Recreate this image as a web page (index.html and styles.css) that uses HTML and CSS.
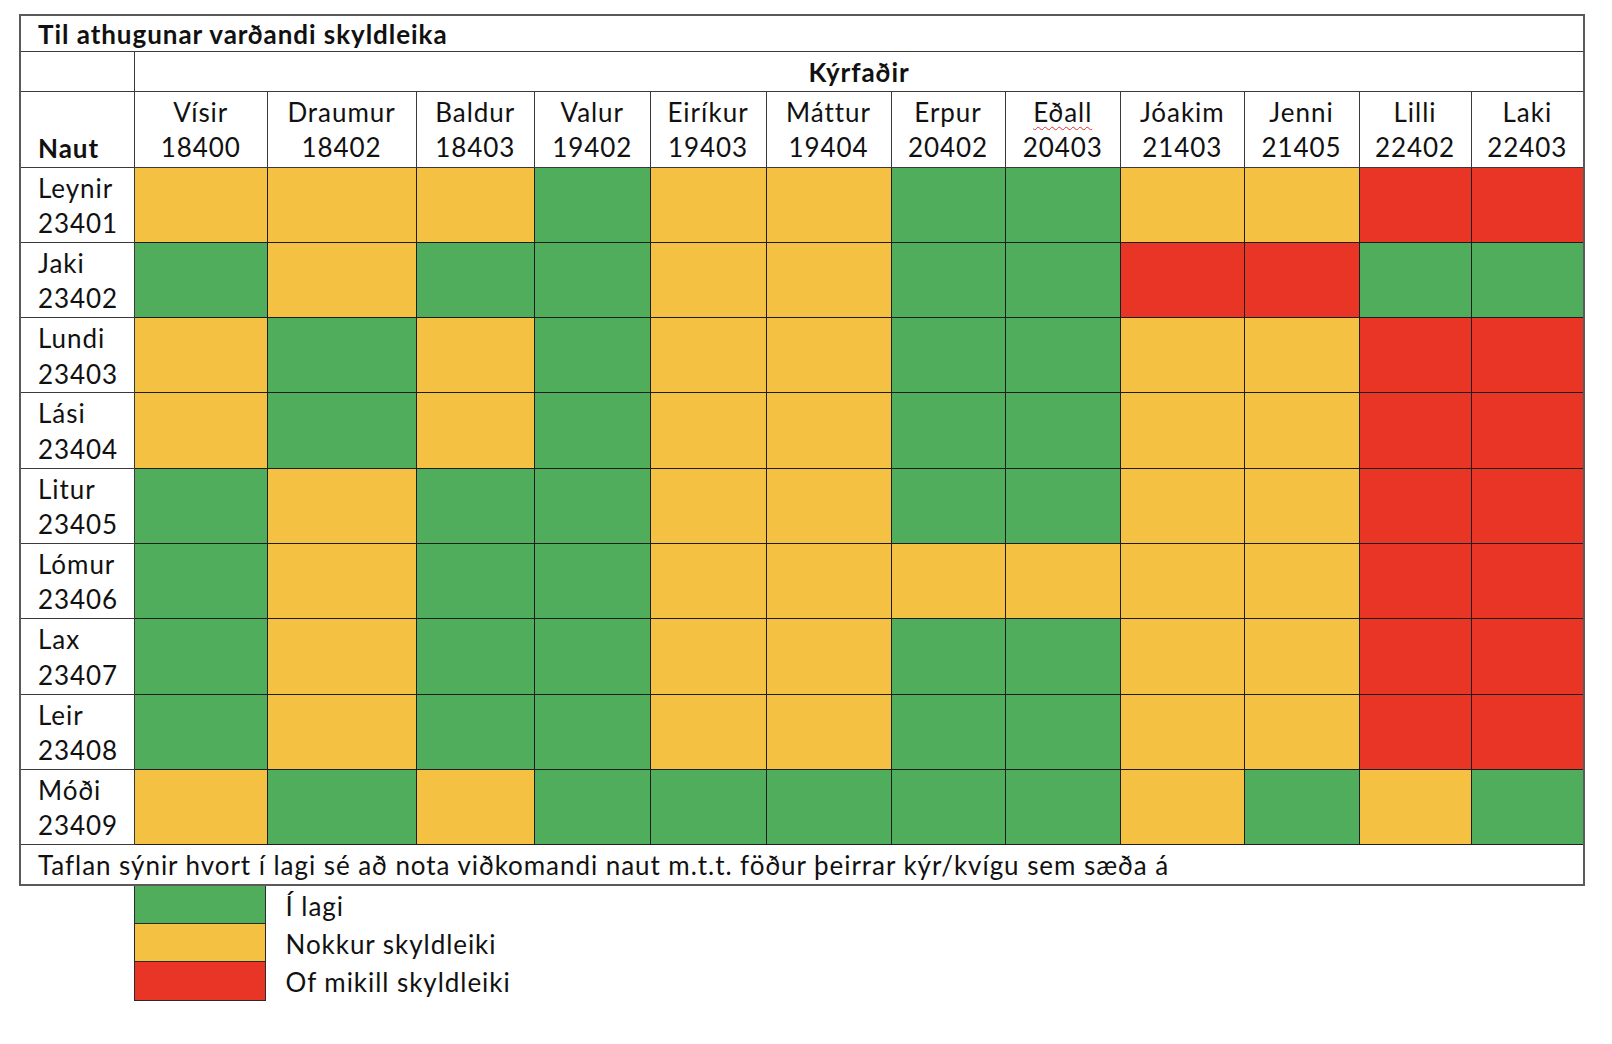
FILE: index.html
```html
<!DOCTYPE html>
<html lang="is">
<head>
<meta charset="utf-8">
<title>Til athugunar varðandi skyldleika</title>
<link rel="stylesheet" href="styles.css">
</head>
<body>
<div class="page">
<table class="matrix">
  <colgroup>
    <col class="c0"><col class="c1"><col class="c2"><col class="c3"><col class="c4"><col class="c5"><col class="c6"><col class="c7"><col class="c8"><col class="c9"><col class="c10"><col class="c11"><col class="c12">
  </colgroup>
  <tr class="r-title"><td colspan="13" class="txt bold"><div class="in">Til athugunar varðandi skyldleika</div></td></tr>
  <tr class="r-kyr"><td class="txt"></td><td colspan="12" class="txt bold center"><div class="in">Kýrfaðir</div></td></tr>
  <tr class="r-head">
    <td class="txt bold bottom"><div class="in nb">Naut</div></td>
    <td class="txt center"><div class="in">Vísir<br>18400</div></td>
    <td class="txt center"><div class="in">Draumur<br>18402</div></td>
    <td class="txt center"><div class="in">Baldur<br>18403</div></td>
    <td class="txt center"><div class="in">Valur<br>19402</div></td>
    <td class="txt center"><div class="in">Eiríkur<br>19403</div></td>
    <td class="txt center"><div class="in">Máttur<br>19404</div></td>
    <td class="txt center"><div class="in">Erpur<br>20402</div></td>
    <td class="txt center"><div class="in"><span class="spell">Eðall</span><br>20403</div></td>
    <td class="txt center"><div class="in">Jóakim<br>21403</div></td>
    <td class="txt center"><div class="in">Jenni<br>21405</div></td>
    <td class="txt center"><div class="in">Lilli<br>22402</div></td>
    <td class="txt center"><div class="in">Laki<br>22403</div></td>
  </tr>
  <tr class="r-data"><td class="txt"><div class="in">Leynir<br>23401</div></td>
    <td class="y"></td><td class="y"></td><td class="y"></td><td class="g"></td><td class="y"></td><td class="y"></td><td class="g"></td><td class="g"></td><td class="y"></td><td class="y"></td><td class="r"></td><td class="r"></td></tr>
  <tr class="r-data"><td class="txt"><div class="in">Jaki<br>23402</div></td>
    <td class="g"></td><td class="y"></td><td class="g"></td><td class="g"></td><td class="y"></td><td class="y"></td><td class="g"></td><td class="g"></td><td class="r"></td><td class="r"></td><td class="g"></td><td class="g"></td></tr>
  <tr class="r-data"><td class="txt"><div class="in">Lundi<br>23403</div></td>
    <td class="y"></td><td class="g"></td><td class="y"></td><td class="g"></td><td class="y"></td><td class="y"></td><td class="g"></td><td class="g"></td><td class="y"></td><td class="y"></td><td class="r"></td><td class="r"></td></tr>
  <tr class="r-data"><td class="txt"><div class="in">Lási<br>23404</div></td>
    <td class="y"></td><td class="g"></td><td class="y"></td><td class="g"></td><td class="y"></td><td class="y"></td><td class="g"></td><td class="g"></td><td class="y"></td><td class="y"></td><td class="r"></td><td class="r"></td></tr>
  <tr class="r-data"><td class="txt"><div class="in">Litur<br>23405</div></td>
    <td class="g"></td><td class="y"></td><td class="g"></td><td class="g"></td><td class="y"></td><td class="y"></td><td class="g"></td><td class="g"></td><td class="y"></td><td class="y"></td><td class="r"></td><td class="r"></td></tr>
  <tr class="r-data"><td class="txt"><div class="in">Lómur<br>23406</div></td>
    <td class="g"></td><td class="y"></td><td class="g"></td><td class="g"></td><td class="y"></td><td class="y"></td><td class="y"></td><td class="y"></td><td class="y"></td><td class="y"></td><td class="r"></td><td class="r"></td></tr>
  <tr class="r-data"><td class="txt"><div class="in">Lax<br>23407</div></td>
    <td class="g"></td><td class="y"></td><td class="g"></td><td class="g"></td><td class="y"></td><td class="y"></td><td class="g"></td><td class="g"></td><td class="y"></td><td class="y"></td><td class="r"></td><td class="r"></td></tr>
  <tr class="r-data"><td class="txt"><div class="in">Leir<br>23408</div></td>
    <td class="g"></td><td class="y"></td><td class="g"></td><td class="g"></td><td class="y"></td><td class="y"></td><td class="g"></td><td class="g"></td><td class="y"></td><td class="y"></td><td class="r"></td><td class="r"></td></tr>
  <tr class="r-data"><td class="txt"><div class="in">Móði<br>23409</div></td>
    <td class="y"></td><td class="g"></td><td class="y"></td><td class="g"></td><td class="g"></td><td class="g"></td><td class="g"></td><td class="g"></td><td class="y"></td><td class="g"></td><td class="y"></td><td class="g"></td></tr>
  <tr class="r-foot"><td colspan="13" class="txt"><div class="in">Taflan sýnir hvort í lagi sé að nota viðkomandi naut m.t.t. föður þeirrar kýr/kvígu sem sæða á</div></td></tr>
</table>
<div class="legend">
  <div class="leg-row"><div class="sw g"></div><div class="leg-label">Í lagi</div></div>
  <div class="leg-row"><div class="sw y"></div><div class="leg-label">Nokkur skyldleiki</div></div>
  <div class="leg-row"><div class="sw r"></div><div class="leg-label">Of mikill skyldleiki</div></div>
</div>
</div>
</body>
</html>
```

FILE: styles.css
```css
html, body {
  margin: 0;
  padding: 0;
  background: #ffffff;
}
body {
  font-family: "Lato", "Liberation Sans", sans-serif;
  font-size: 26px;
  letter-spacing: 0.95px;
  color: #111111;
}
.page {
  padding: 14px 0 0 19px;
}
.matrix {
  border-collapse: collapse;
  table-layout: fixed;
  width: 1564px;
  border: 2px solid #5a5a5a;
}
.c0 { width: 114.5px; }
.c1 { width: 132.5px; }
.c2 { width: 149px; }
.c3 { width: 118.5px; }
.c4 { width: 115.5px; }
.c5 { width: 116px; }
.c6 { width: 125px; }
.c7 { width: 114px; }
.c8 { width: 115.5px; }
.c9 { width: 123.5px; }
.c10 { width: 115px; }
.c11 { width: 112px; }
.c12 { width: 113px; }

.matrix td {
  border: 1px solid #1e1e1e;
  padding: 0;
  vertical-align: top;
}
.matrix td.txt {
  border-color: #3a3a3a;
}
.r-title td { height: 34px; }
.r-kyr td { height: 37px; }
.r-head td { height: 75px; }
.r-data td { height: 74.3px; }
.r-foot td { height: 38px; }

.in {
  line-height: 35.5px;
  padding: 3px 4px 0 17px;
  white-space: nowrap;
}
.r-title .in {
  line-height: 34px;
  padding-top: 1px;
}
.center .in {
  padding-left: 0;
  padding-right: 0;
  text-align: center;
}
.bold { font-weight: 700; }
.matrix td.bottom { vertical-align: bottom; }
.in.nb { padding-top: 0; }
.spell {
  text-decoration: underline wavy #e03030;
  text-decoration-thickness: 1px;
  text-underline-offset: 4px;
}

.g { background: #4fad5b; }
.y { background: #f4c142; }
.r { background: #e83525; }

.legend {
  margin-left: 114.5px;
  display: flex;
  flex-direction: column;
}
.leg-row {
  display: flex;
  align-items: stretch;
  height: 38.3px;
}
.sw {
  width: 132px;
  border: 1px solid #2a2a2a;
  border-top: none;
  box-sizing: border-box;
}
.leg-label {
  padding: 3px 0 0 20px;
  line-height: 35.5px;
  white-space: nowrap;
}
```
